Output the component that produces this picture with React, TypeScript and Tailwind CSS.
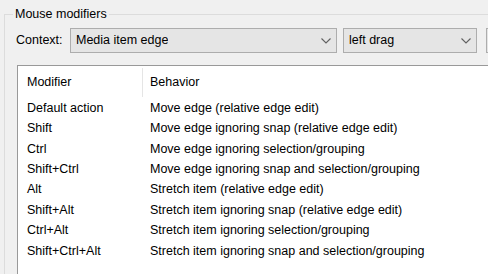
const rows: [string, string][] = [
  ["Default action", "Move edge (relative edge edit)"],
  ["Shift", "Move edge ignoring snap (relative edge edit)"],
  ["Ctrl", "Move edge ignoring selection/grouping"],
  ["Shift+Ctrl", "Move edge ignoring snap and selection/grouping"],
  ["Alt", "Stretch item (relative edge edit)"],
  ["Shift+Alt", "Stretch item ignoring snap (relative edge edit)"],
  ["Ctrl+Alt", "Stretch item ignoring selection/grouping"],
  ["Shift+Ctrl+Alt", "Stretch item ignoring snap and selection/grouping"],
];

function Chevron() {
  return (
    <svg width="10" height="6" viewBox="0 0 10 6" className="shrink-0">
      <path d="M0.5 0.5 L5 5 L9.5 0.5" fill="none" stroke="#606060" strokeWidth="1.1" />
    </svg>
  );
}

function Combo({ value, width }: { value: string; width: string }) {
  return (
    <div
      className={`${width} flex h-[25px] shrink-0 items-center justify-between border border-[#adadad] bg-[#e5e5e5] pl-[5px] pr-[5px] text-black`}
    >
      <span className="truncate">{value}</span>
      <Chevron />
    </div>
  );
}

export default function App() {
  return (
    <div className="h-[274px] w-[488px] overflow-hidden bg-[#f0f0f0] pt-[7px] font-['Liberation_Sans',Arial,sans-serif] text-[12.5px] leading-[15px] text-black">
      <fieldset className="ml-[4px] w-[520px] border-l border-t border-[#dcdcdc]">
        <legend className="ml-[8px] px-[2px] leading-[15px]">Mouse modifiers</legend>
        <div className="flex items-center pl-[11px] pt-[6px]">
          <span className="w-[54px] shrink-0">Context:</span>
          <Combo value="Media item edge" width="w-[267px]" />
          <div className="ml-[6px]">
            <Combo value="left drag" width="w-[134px]" />
          </div>
          <div className="ml-[9px] h-[25px] w-[40px] shrink-0 border border-[#adadad] bg-[#e5e5e5]" />
        </div>
        <div className="ml-[12px] mt-[12px] h-[230px] w-[500px] border border-[#999999] bg-white">
          <div className="flex h-[32px] items-center">
            <div className="w-[124px] shrink-0 pl-[9px]">Modifier</div>
            <div className="h-[29px] w-px shrink-0 bg-[#e5e5e5]" />
            <div className="pl-[7px]">Behavior</div>
          </div>
          {rows.map(([mod, behavior]) => (
            <div key={mod} className="flex h-[20.43px] items-center">
              <div className="w-[125px] shrink-0 pl-[9px]">{mod}</div>
              <div className="pl-[7px]">{behavior}</div>
            </div>
          ))}
        </div>
      </fieldset>
    </div>
  );
}
